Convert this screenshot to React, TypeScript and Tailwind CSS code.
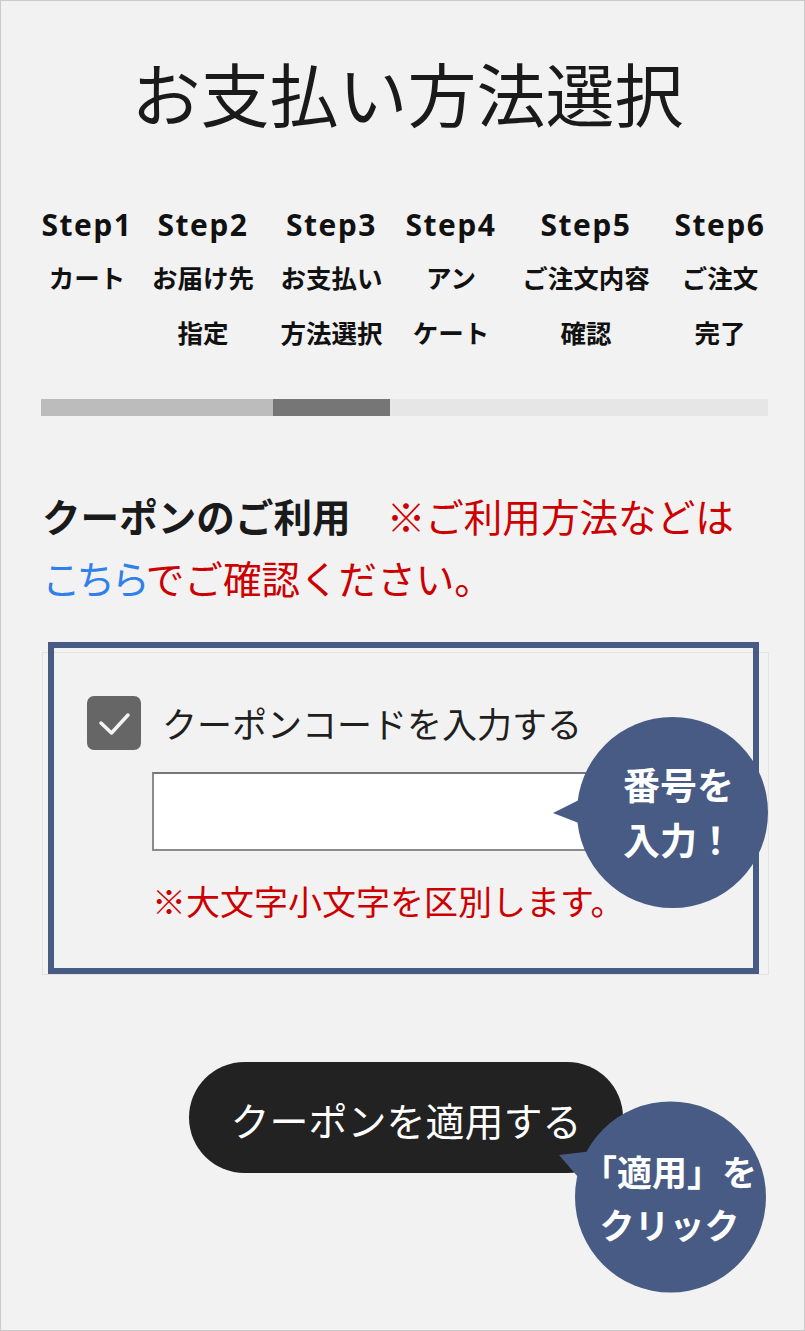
import React from "react";

const steps = [
  { n: "Step1", l: ["カート"] },
  { n: "Step2", l: ["お届け先", "指定"] },
  { n: "Step3", l: ["お支払い", "方法選択"] },
  { n: "Step4", l: ["アン", "ケート"] },
  { n: "Step5", l: ["ご注文内容", "確認"] },
  { n: "Step6", l: ["ご注文", "完了"] },
];

export default function App() {
  return (
    <div className="relative w-[805px] h-[1331px] border border-[#cacaca] bg-[#f2f2f2] overflow-hidden font-['Noto_Sans_CJK_JP',sans-serif] text-[#1a1a1a]">
      {/* Title */}
      <h1 className="mt-[51px] h-[80px] pl-[10px] text-center text-[69px] leading-[80px] font-normal text-[#1a1a1a]">
        お支払い方法選択
      </h1>

      {/* Steps */}
      <div className="mt-[71px] ml-[40px] grid grid-cols-[92px_140px_117px_122px_148px_120px]">
        {steps.map((s) => (
          <div key={s.n} className="flex flex-col items-center">
            <div className="h-[44px] text-[30px] leading-[44px] font-bold tracking-[1.5px] font-['Open_Sans','Noto_Sans_CJK_JP',sans-serif] text-[#111]">
              {s.n}
            </div>
            <div className="mt-[2px] text-center text-[25.5px] leading-[55px] font-bold text-[#111] whitespace-nowrap">
              {s.l.map((t) => (
                <div key={t}>{t}</div>
              ))}
            </div>
          </div>
        ))}
      </div>

      {/* Progress bar */}
      <div className="mt-[40px] ml-[40px] w-[727px] h-[17px] flex bg-[#e6e6e6]">
        <div className="w-[232px] h-full bg-[#bcbcbc]" />
        <div className="w-[117px] h-full bg-[#767676]" />
      </div>

      {/* Coupon heading */}
      <div className="mt-[68px] pl-[41px] text-[38.6px] leading-[62px] whitespace-nowrap">
        <span className="font-bold text-[#1a1a1a]">クーポンのご利用</span>
        <span className="ml-[36px] text-[#cc0000]">※ご利用方法などは</span>
        <br />
        <span className="text-[#2f80ed] tracking-[-4px]">こちら</span>
        <span className="text-[#cc0000]">でご確認ください。</span>
      </div>

      {/* Coupon form */}
      <div className="mt-[44px] ml-[41px] w-[727px] h-[323px] border border-[#e3e3e3]">
        <div className="mt-[43px] ml-[44px] flex items-center">
          <div className="w-[54px] h-[54px] rounded-[7px] bg-[#666666] flex items-center justify-center">
            <svg width="54" height="54" viewBox="0 0 54 54">
              <path
                d="M14 27 L24.5 37 L41 19"
                fill="none"
                stroke="#f4f4f4"
                strokeWidth="3.5"
                strokeLinecap="round"
                strokeLinejoin="round"
              />
            </svg>
          </div>
          <span className="ml-[21px] text-[35px] leading-[54px] text-[#1f1f1f]">
            クーポンコードを入力する
          </span>
        </div>
        <div className="mt-[22px] ml-[109px] w-[448px] h-[79px] bg-white border-2 border-[#8c8c8c] border-t-[#777777]" />
        <div className="mt-[30px] ml-[109px] text-[34px] leading-[40px] text-[#cc0000] whitespace-nowrap">
          ※大文字小文字を区別します。
        </div>
      </div>

      {/* Apply button */}
      <div className="mt-[87px] ml-[188px] w-[434px] h-[111px] rounded-full bg-[#222222] flex items-center justify-center pt-[2px]">
        <span className="text-[39px] leading-[50px] text-white">クーポンを適用する</span>
      </div>

      {/* Annotation rectangle */}
      <div className="absolute left-[47px] top-[641px] w-[711px] h-[332px] border-[6px] border-[#475b85] pointer-events-none" />

      {/* Bubble 1 */}
      <div className="absolute left-[552px] top-[716px] w-[215px] h-[191px]">
        <svg width="215" height="191" viewBox="0 0 215 191" className="absolute left-0 top-0">
          <circle cx="119.5" cy="95.5" r="95.5" fill="#475b85" />
          <polygon points="0,96 36,78 36,110" fill="#475b85" />
        </svg>
        <div className="absolute left-[70px] top-[40px] w-[111px] text-center text-[37px] leading-[55px] font-bold text-white whitespace-nowrap">
          <div>番号を</div>
          <div>入力！</div>
        </div>
      </div>

      {/* Bubble 2 */}
      <div className="absolute left-[558px] top-[1100px] w-[208px] h-[192px]">
        <svg width="208" height="192" viewBox="0 0 208 192" className="absolute left-0 top-0">
          <circle cx="111.5" cy="96" r="95.5" fill="#475b85" />
          <polygon points="0,54 34,50 26,84" fill="#475b85" />
        </svg>
        <div className="absolute left-[23px] top-[43px] w-[175px] text-center text-[35px] leading-[53px] font-bold text-white whitespace-nowrap">
          <div>「適用」を</div>
          <div>クリック</div>
        </div>
      </div>
    </div>
  );
}
